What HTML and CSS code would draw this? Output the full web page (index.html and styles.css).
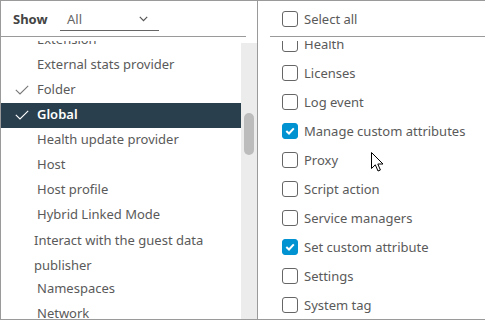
FILE: index.html
```html
<!DOCTYPE html>
<html lang="en">
<head>
    <meta charset="UTF-8">
    <meta name="viewport" content="width=device-width, initial-scale=1.0">
    <title>Privileges</title>

    <link rel="stylesheet" href="styles.css">
</head>
<body>

    <div class="panel">
        <!-- Privilege groups -->
        <div class="groups">
            <div class="filter">
                <span class="filter-label">Show</span>
                <div class="select">
                    <span>All</span>
                    <svg class="chevron" width="9" height="6" viewBox="0 0 9 6"><path d="M0.8 0.8 L4.5 4.6 L8.2 0.8" fill="none" stroke="#555" stroke-width="1.2"/></svg>
                </div>
            </div>
            <div class="groups-body">
                <div class="viewport">
                    <ul class="group-list">
                        <li>Extension</li>
                        <li>External stats provider</li>
                        <li class="checked">
                            <svg class="tick" width="14" height="10" viewBox="0 0 14 10"><path d="M0.8 4.8 L5 9 L13.2 0.8" fill="none" stroke="currentColor" stroke-width="1.1"/></svg>
                            Folder
                        </li>
                        <li class="checked active">
                            <svg class="tick" width="14" height="10" viewBox="0 0 14 10"><path d="M0.8 4.8 L5 9 L13.2 0.8" fill="none" stroke="currentColor" stroke-width="1.1"/></svg>
                            Global
                        </li>
                        <li>Health update provider</li>
                        <li>Host</li>
                        <li>Host profile</li>
                        <li>Hybrid Linked Mode</li>
                        <li class="wrap">Interact with the guest data publisher</li>
                        <li>Namespaces</li>
                        <li>Network</li>
                    </ul>
                </div>
                <div class="scrollbar"><div class="thumb"></div></div>
            </div>
        </div>

        <!-- Privileges of the selected group -->
        <div class="privileges">
            <label class="select-all"><span class="box"></span>Select all</label>
            <div class="privileges-body">
                <div class="viewport">
                    <ul class="priv-list">
                        <li><span class="box"></span>Health</li>
                        <li><span class="box"></span>Licenses</li>
                        <li><span class="box"></span>Log event</li>
                        <li><span class="box on"><svg width="10" height="8" viewBox="0 0 10 8"><path d="M1.3 4 L4 6.5 L8.8 1.4" fill="none" stroke="#fff" stroke-width="2"/></svg></span>Manage custom attributes</li>
                        <li><span class="box"></span>Proxy</li>
                        <li><span class="box"></span>Script action</li>
                        <li><span class="box"></span>Service managers</li>
                        <li><span class="box on"><svg width="10" height="8" viewBox="0 0 10 8"><path d="M1.3 4 L4 6.5 L8.8 1.4" fill="none" stroke="#fff" stroke-width="2"/></svg></span>Set custom attribute</li>
                        <li><span class="box"></span>Settings</li>
                        <li><span class="box"></span>System tag</li>
                    </ul>
                </div>
            </div>
        </div>

        <!-- mouse pointer -->
        <svg class="cursor" width="14" height="21" viewBox="0 0 14 21"><path d="M0.5 0.5 L0.5 16.5 L4.3 12.8 L7 19 L9.4 18 L6.8 12 L12 12 Z" fill="#fff" stroke="#000" stroke-width="1" stroke-linejoin="round"/></svg>
    </div>

</body>
</html>
```

FILE: styles.css
```css
body {
    margin: 0;
    font-family: 'Noto Sans', sans-serif;
    font-size: 13px;
    color: #5a5a5a;
    background: #fff;
}

ul {
    list-style: none;
    margin: 0;
    padding: 0;
}

.panel {
    position: relative;
    width: 485px;
    height: 320px;
    box-sizing: border-box;
    border-top: 1px solid #9a9a9a;
    border-left: 1px solid #9a9a9a;
    border-bottom: 1px solid #9a9a9a;
    display: flex;
}

.viewport {
    height: 100%;
    overflow: hidden;
}

/* Left column */
.groups {
    width: 256px;
    border-right: 1px solid #9a9a9a;
    display: flex;
    flex-direction: column;
}

.filter {
    height: 35px;
    margin-right: 11px;
    border-bottom: 1px solid #9a9a9a;
    display: flex;
    align-items: center;
    padding-left: 12px;
}

.filter-label {
    font-weight: 700;
    color: #444;
    width: 47px;
}

.select {
    width: 92px;
    height: 22px;
    padding-left: 7px;
    margin-top: 1px;
    border-bottom: 1px solid #666;
    display: flex;
    align-items: center;
    justify-content: space-between;
    color: #666;
}

.chevron {
    margin-right: 11px;
}

.groups-body {
    flex: 1;
    min-height: 0;
    display: flex;
    padding-top: 4px;
}

.groups-body .viewport {
    flex: 1;
}

.group-list {
    margin-top: -13px;
}

.group-list li {
    position: relative;
    height: 25px;
    line-height: 23px;
    padding-left: 36px;
    white-space: nowrap;
}

.group-list li.wrap {
    height: auto;
    line-height: 24.5px;
    padding-left: 33px;
    padding-right: 30px;
    white-space: normal;
}

.group-list li.active {
    background: #2a3f4e;
    color: #fff;
    font-weight: 600;
}

.tick {
    position: absolute;
    left: 14px;
    top: 7px;
    color: #777;
}

.active .tick {
    color: #fff;
}

.scrollbar {
    width: 16px;
    margin-top: 2px;
    background: #ececec;
}

.thumb {
    width: 10px;
    height: 42px;
    margin: 70px 3px 0;
    border-radius: 5px;
    background: #bcbcbc;
}

/* Right column */
.privileges {
    flex: 1;
    display: flex;
    flex-direction: column;
}

.select-all {
    height: 35px;
    margin-left: 12px;
    padding-left: 12px;
    border-bottom: 1px solid #9a9a9a;
    display: flex;
    align-items: center;
    gap: 6px;
}

.privileges-body {
    flex: 1;
    min-height: 0;
    padding-top: 4px;
}

.priv-list {
    margin-top: -12px;
}

.priv-list li {
    height: 29px;
    padding-left: 24px;
    display: flex;
    align-items: center;
    gap: 6px;
}

.box {
    width: 16px;
    height: 16px;
    box-sizing: border-box;
    border: 1px solid #666;
    border-radius: 3px;
    display: flex;
    align-items: center;
    justify-content: center;
    flex-shrink: 0;
}

.box.on {
    background: #0092d1;
    border-color: #0092d1;
}

.cursor {
    position: absolute;
    left: 370px;
    top: 151px;
}
```
